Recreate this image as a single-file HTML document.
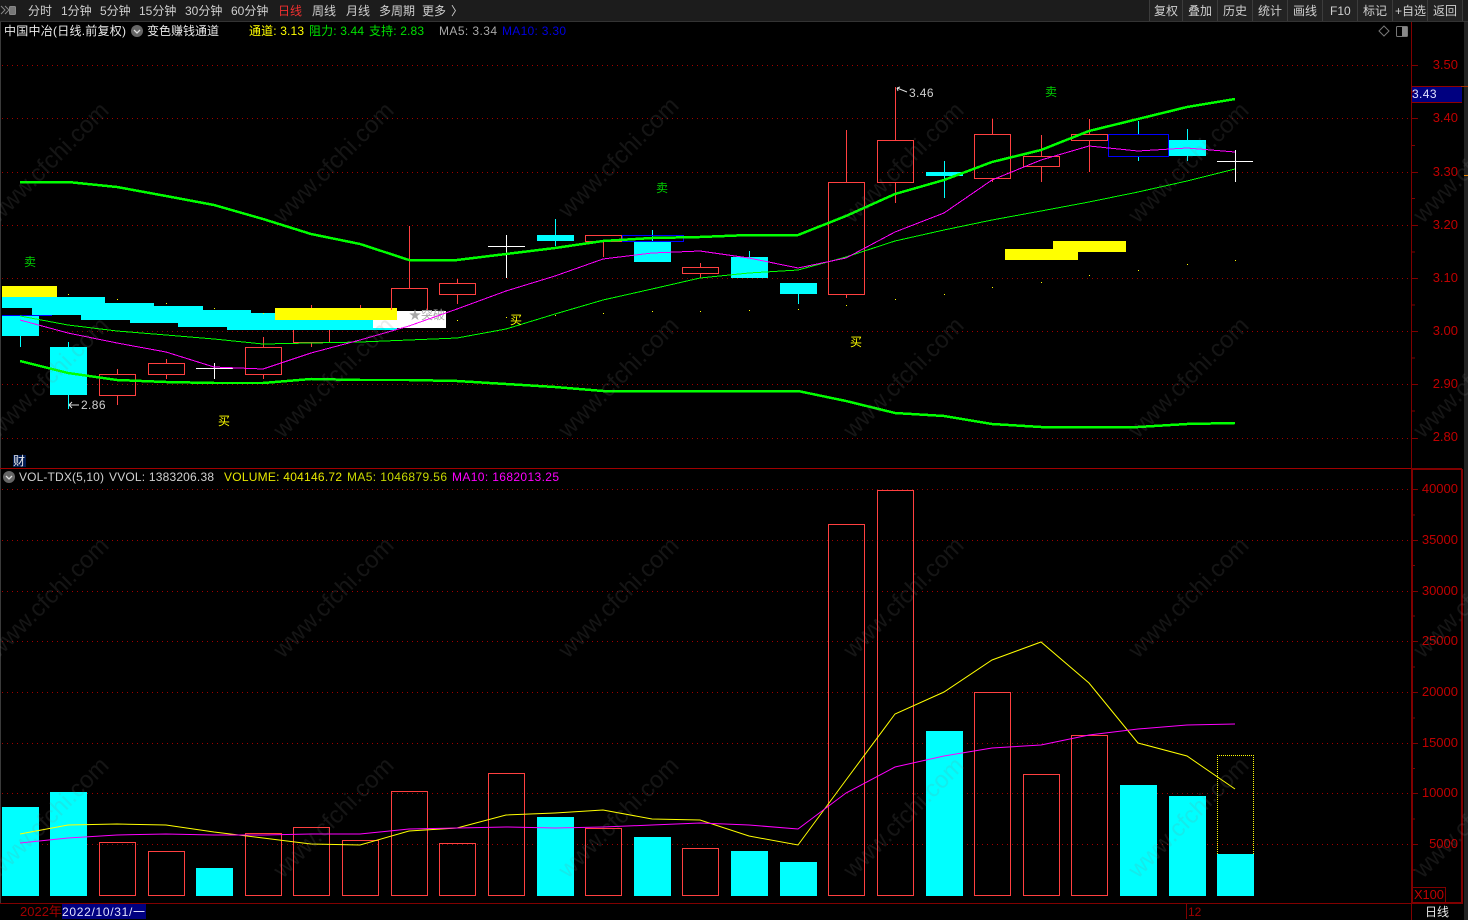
<!DOCTYPE html>
<html><head><meta charset="utf-8"><style>
html,body{margin:0;padding:0;background:#000;width:1468px;height:920px;overflow:hidden}
svg{display:block;position:absolute;left:0;top:0}
text{font-family:"Liberation Sans","Noto Sans CJK SC",sans-serif;font-size:12px}
.c{shape-rendering:crispEdges}
.r{fill:none;stroke:#ff4040;stroke-width:1}
.w{stroke:#ff4040;stroke-width:1}
.cw{stroke:#0ff;stroke-width:1}
.g{stroke:#a00000;stroke-width:1;stroke-dasharray:1 4}
.t{fill:#cfcfcf}
.y text{fill:#c00000;text-anchor:end;font-size:13px}
.wm text{font-size:24px;fill:rgba(130,130,130,.16);text-anchor:middle}
</style></head><body>
<svg width="1468" height="920" viewBox="0 0 1468 920" xmlns="http://www.w3.org/2000/svg">
<rect width="1468" height="920" fill="#000"/>
<!-- toolbar -->
<g class="c">
<rect width="1468" height="21" fill="#1c1c1c"/>
<rect y="21" width="1468" height="1" fill="#333"/>
<rect x="1149" width="313" height="21" fill="#232323"/>
<g fill="#3c3c3c"><rect x="1149" width="1" height="21"/><rect x="1182" width="1" height="21"/><rect x="1217" width="1" height="21"/><rect x="1252" width="1" height="21"/><rect x="1287" width="1" height="21"/><rect x="1322" width="1" height="21"/><rect x="1357" width="1" height="21"/><rect x="1392" width="1" height="21"/><rect x="1427" width="1" height="21"/><rect x="1462" width="1" height="21"/></g>
<rect x="0" y="22" width="1" height="882" fill="#3a3a3a"/>
</g>
<path d="M1 6l4 4-4 4M5 6l4 4-4 4" fill="none" stroke="#888" stroke-width="1"/>
<rect x="9.5" y="6.5" width="6" height="8" rx="1" fill="#777" stroke="#888"/>
<g class="t">
<text x="28" y="15">分时</text><text x="61" y="15">1分钟</text><text x="100" y="15">5分钟</text><text x="139" y="15">15分钟</text><text x="185" y="15">30分钟</text><text x="231" y="15">60分钟</text>
<text x="278" y="15" style="fill:#f03030">日线</text>
<text x="312" y="15">周线</text><text x="346" y="15">月线</text><text x="379" y="15">多周期</text><text x="422" y="15">更多</text><text x="451" y="15">〉</text>
<text x="1154" y="15">复权</text><text x="1188" y="15">叠加</text><text x="1223" y="15">历史</text><text x="1258" y="15">统计</text><text x="1293" y="15">画线</text><text x="1330" y="15">F10</text><text x="1363" y="15">标记</text><text x="1395" y="15">+自选</text><text x="1433" y="15">返回</text>
</g>
<!-- grid -->
<g class="c">
<path class="g" d="M2 65.5H1411M2 118.5H1411M2 172.5H1411M2 225.5H1411M2 278.5H1411M2 331.5H1411M2 384.5H1411M2 438.5H1411M2 489.5H1411M2 540.5H1411M2 591.5H1411M2 641.5H1411M2 692.5H1411M2 743.5H1411M2 793.5H1411M2 844.5H1411"/>
</g>
<!-- upper-left stepped blocks -->
<g class="c">
<rect x="373" y="311" width="73" height="17" fill="#fff"/>
<path fill="#0ff" d="M2 297H105V303H154V306H203V310H251V313H397V330H227V327H178V323H130V320H81V315H32V308H2Z"/>
<rect x="373" y="320" width="24" height="8" fill="#fff"/>
<rect x="2" y="286" width="55" height="11" fill="#ff0"/>
<rect x="275" y="308" width="122" height="12" fill="#ff0"/>
<rect x="1005" y="249" width="73" height="11" fill="#ff0"/>
<rect x="1053" y="241" width="73" height="11" fill="#ff0"/>
</g>
<text x="409" y="319" fill="#a8a8a8">★突破</text>
<!-- candles -->
<g class="c">
<path class="cw" d="M20.5 336V347M68.5 342V409M555.5 219V246M652.5 230V242M749.5 251V258M798.5 294V304M944.5 161V198M1138.5 121V134M1138.5 157V161M1187.5 129V161"/>
<path class="w" d="M117.5 369V374M117.5 396V405M166.5 359V363M166.5 375V379M263.5 337V347M263.5 375V379M311.5 305V308M311.5 343V347M360.5 305V308M409.5 226V288M457.5 279V283M457.5 295V304M603.5 242V257M700.5 263V267M700.5 274V278M846.5 130V182M846.5 294V298M895.5 87V140M895.5 182V203M992.5 119V134M992.5 178V182M1041.5 135V156M1041.5 166V182M1089.5 119V134M1089.5 140V172"/>
<rect x="2" y="316" width="37" height="20" fill="#0ff"/>
<rect x="50" y="347" width="37" height="48" fill="#0ff"/>
<rect x="537" y="235" width="37" height="6" fill="#0ff"/>
<rect x="634" y="242" width="37" height="20" fill="#0ff"/>
<rect x="731" y="257" width="37" height="21" fill="#0ff"/>
<rect x="780" y="283" width="37" height="11" fill="#0ff"/>
<rect x="926" y="172" width="37" height="4" fill="#0ff"/>
<rect x="1169" y="140" width="37" height="16" fill="#0ff"/>
<rect class="r" x="99.5" y="374.5" width="36" height="21"/>
<rect class="r" x="148.5" y="363.5" width="36" height="11"/>
<rect class="r" x="245.5" y="347.5" width="36" height="27"/>
<path class="r" d="M293.5 330V342.5H329.5V330"/>
<path class="r" d="M391.5 310V288.5H427.5V310"/>
<rect class="r" x="439.5" y="283.5" width="36" height="11"/>
<rect class="r" x="585.5" y="235.5" width="36" height="6"/>
<rect class="r" x="682.5" y="267.5" width="36" height="6"/>
<rect class="r" x="828.5" y="182.5" width="36" height="112"/>
<rect class="r" x="877.5" y="140.5" width="36" height="42"/>
<rect class="r" x="974.5" y="134.5" width="36" height="44"/>
<rect class="r" x="1023.5" y="156.5" width="36" height="10"/>
<rect class="r" x="1071.5" y="134.5" width="36" height="6"/>
<rect x="622.5" y="235.5" width="61" height="6" fill="none" stroke="#00f"/>
<rect x="1108.5" y="134.5" width="60" height="22" fill="none" stroke="#00f" stroke-width="1.4"/>
<path d="M2 315.5H52" stroke="#00f"/>
<path stroke="#fff" d="M196 368.5H233M214.5 363V379M488 246.5H525M506.5 235V278M1217 161.5H1253M1235.5 150V182"/>
<g fill="#ff0">
<rect x="68" y="294" width="1" height="1"/><rect x="117" y="299" width="1" height="1"/><rect x="166" y="303" width="1" height="1"/><rect x="214" y="308" width="1" height="1"/><rect x="263" y="313" width="1" height="1"/><rect x="457" y="320" width="1" height="1"/><rect x="506" y="317" width="1" height="1"/><rect x="555" y="315" width="1" height="1"/><rect x="603" y="313" width="1" height="1"/><rect x="652" y="311" width="1" height="1"/><rect x="700" y="311" width="1" height="1"/><rect x="749" y="310" width="1" height="1"/><rect x="798" y="309" width="1" height="1"/><rect x="846" y="305" width="1" height="1"/><rect x="895" y="299" width="1" height="1"/><rect x="944" y="294" width="1" height="1"/><rect x="992" y="287" width="1" height="1"/><rect x="1041" y="282" width="1" height="1"/><rect x="1089" y="275" width="1" height="1"/><rect x="1138" y="270" width="1" height="1"/><rect x="1187" y="264" width="1" height="1"/><rect x="1235" y="260" width="1" height="1"/>
</g>
</g>
<!-- price lines -->
<g fill="none" class="c">
<polyline stroke="#0f0" stroke-width="2.5" points="20,182 68,182 117,187 166,196 214,205 263,219 311,234 360,244 409,260 457,260 506,254 555,248 603,241 652,238 700,237 749,235 798,235 846,216 895,194 944,180 992,162 1041,150 1089,131 1138,119 1187,107 1235,99"/>
<polyline stroke="#0f0" stroke-width="2.5" points="20,361 68,373 117,380 166,382 214,383 263,383 311,379 360,380 409,380 457,381 506,384 555,387 603,391 652,391 700,391 749,391 798,391 846,401 895,413 944,416 992,424 1041,427 1089,427 1138,427 1187,424 1235,423"/>
<polyline stroke="#0f0" stroke-width="1" points="20,316 68,325 117,331 166,335 214,339 263,344 311,343 360,342 409,340 457,338 506,329 555,314 603,300 652,289 700,278 749,273 798,270 846,257 895,241 944,230 992,220 1041,211 1089,202 1138,192 1187,181 1235,169"/>
<polyline stroke="#f0f" stroke-width="1" points="20,320 68,333 117,343 166,352 214,367 263,369 311,353 360,340 409,326 457,309 506,291 555,276 603,259 652,253 700,251 749,258 798,268 846,258 895,232 944,213 992,180 1041,160 1089,146 1138,151 1187,148 1235,152"/>
</g>
<!-- annotations -->
<text x="24" y="266" style="fill:#00d000">卖</text>
<text x="656" y="192" style="fill:#00d000">卖</text>
<text x="1045" y="96" style="fill:#00d000">卖</text>
<text x="218" y="425" style="fill:#ff0">买</text>
<text x="510" y="324" style="fill:#ff0">买</text>
<text x="850" y="346" style="fill:#ff0">买</text>
<text x="909" y="97" class="t" textLength="24.5" lengthAdjust="spacing">3.46</text>
<text x="81" y="409" class="t" textLength="24.5" lengthAdjust="spacing">2.86</text>
<path d="M897 88l10 4M897 88l3-1M897 88l1 3M69 405H79M69 405l3-3M69 405l3 3" stroke="#ddd" fill="none"/>
<!-- info line -->
<text x="4" y="35" style="fill:#e8e8e8" textLength="122" lengthAdjust="spacing">中国中冶(日线.前复权)</text>
<circle cx="137" cy="31" r="6" fill="#666"/><path d="M134 30l3 3 3-3" stroke="#ddd" fill="none" stroke-width="1.3"/>
<text x="147" y="35" style="fill:#e8e8e8">变色赚钱通道</text>
<text x="249" y="35" style="fill:#ff0" textLength="55" lengthAdjust="spacing">通道: 3.13</text>
<text x="309" y="35" style="fill:#00e000" textLength="55" lengthAdjust="spacing">阻力: 3.44</text>
<text x="369" y="35" style="fill:#00e000" textLength="55" lengthAdjust="spacing">支持: 2.83</text>
<text x="439" y="35" style="fill:#a8a8a8" textLength="58" lengthAdjust="spacing">MA5: 3.34</text>
<text x="502" y="35" style="fill:#0000e0" textLength="64" lengthAdjust="spacing">MA10: 3.30</text>
<path d="M1384 26l5 5-5 5-5-5z" fill="none" stroke="#777"/>
<rect x="1396.5" y="26.5" width="11" height="10" rx="1" fill="none" stroke="#777"/><rect x="1402" y="27" width="5" height="9" fill="#888"/>
<!-- frame -->
<g class="c">
<rect x="0" y="468" width="1461" height="1" fill="#a00000"/>
<rect x="1411" y="22" width="1" height="882" fill="#800000"/>
<rect x="1411" y="469" width="2" height="435" fill="#800000"/>
<rect x="1461" y="469" width="2" height="435" fill="#800000"/>
<rect x="1412" y="468" width="50" height="2" fill="#800000"/>
<rect x="1464" y="22" width="4" height="898" fill="#222"/>
<rect x="0" y="903" width="1462" height="1" fill="#800000"/>
<rect x="1412" y="902" width="50" height="2" fill="#800000"/>
<rect x="1412" y="86" width="50" height="2" fill="#900000"/>
<rect x="1412" y="87" width="50" height="15" fill="#000080"/>
<rect x="1412" y="102" width="50" height="1" fill="#900000"/>
<rect x="1461" y="86" width="7" height="1" fill="#a03000"/>
<rect x="1464" y="175" width="4" height="1" fill="#e08000"/>
<path stroke="#800000" d="M1412 65.5H1418M1412 118.5H1418M1412 172.5H1418M1412 225.5H1418M1412 278.5H1418M1412 331.5H1418M1412 384.5H1418M1412 438.5H1418M1412 92H1415M1412 145.5H1415M1412 198.5H1415M1412 252H1415M1412 305H1415M1412 358H1415M1412 411H1415M1412 489.5H1418M1412 540.5H1418M1412 591.5H1418M1412 641.5H1418M1412 692.5H1418M1412 743.5H1418M1412 793.5H1418M1412 844.5H1418M1412 515H1415M1412 565.5H1415M1412 616H1415M1412 667H1415M1412 718H1415M1412 768.5H1415M1412 819H1415M1412 870H1415"/>
</g>
<text x="1412" y="98" style="fill:#e0e0ff" textLength="24.5" lengthAdjust="spacing">3.43</text>
<g class="y">
<text x="1458" y="69">3.50</text><text x="1458" y="122">3.40</text><text x="1458" y="176">3.30</text><text x="1458" y="229">3.20</text><text x="1458" y="282">3.10</text><text x="1458" y="335">3.00</text><text x="1458" y="388">2.90</text><text x="1458" y="441">2.80</text>
<text x="1458" y="493">40000</text><text x="1458" y="544">35000</text><text x="1458" y="595">30000</text><text x="1458" y="645">25000</text><text x="1458" y="696">20000</text><text x="1458" y="747">15000</text><text x="1458" y="797">10000</text><text x="1458" y="848">5000</text>
</g>
<rect x="1412.5" y="887.5" width="33" height="15" fill="none" stroke="#800000" class="c"/>
<text x="1414" y="899" style="fill:#c00000;font-size:13px" textLength="30" lengthAdjust="spacing">X100</text>
<!-- vol header -->
<rect x="13" y="455" width="13" height="12" fill="#001a50" class="c"/>
<text x="13" y="465" style="fill:#e8e8e8">财</text>
<circle cx="9" cy="477" r="6" fill="#666"/><path d="M6 476l3 3 3-3" stroke="#ddd" fill="none" stroke-width="1.3"/>
<text x="19" y="481" style="fill:#d0d0d0" textLength="85" lengthAdjust="spacing">VOL-TDX(5,10)</text>
<text x="109" y="481" style="fill:#d0d0d0" textLength="105" lengthAdjust="spacing">VVOL: 1383206.38</text>
<text x="224" y="481" style="fill:#e8e800" textLength="118" lengthAdjust="spacing">VOLUME: 404146.72</text>
<text x="347" y="481" style="fill:#c8d800" textLength="100" lengthAdjust="spacing">MA5: 1046879.56</text>
<text x="452" y="481" style="fill:#f0f" textLength="107" lengthAdjust="spacing">MA10: 1682013.25</text>
<!-- volume bars -->
<g class="c">
<g fill="#0ff">
<rect x="2" y="807" width="37" height="89"/><rect x="50" y="792" width="37" height="104"/><rect x="196" y="868" width="37" height="28"/><rect x="537" y="817" width="37" height="79"/><rect x="634" y="837" width="37" height="59"/><rect x="731" y="851" width="37" height="45"/><rect x="780" y="862" width="37" height="34"/><rect x="926" y="731" width="37" height="165"/><rect x="1120" y="785" width="37" height="111"/><rect x="1169" y="796" width="37" height="100"/><rect x="1217" y="854" width="37" height="42"/>
</g>
<rect class="r" x="99.5" y="842.5" width="36" height="53"/>
<rect class="r" x="148.5" y="851.5" width="36" height="44"/>
<rect class="r" x="245.5" y="833.5" width="36" height="62"/>
<rect class="r" x="293.5" y="827.5" width="36" height="68"/>
<rect class="r" x="342.5" y="840.5" width="36" height="55"/>
<rect class="r" x="391.5" y="791.5" width="36" height="104"/>
<rect class="r" x="439.5" y="843.5" width="36" height="52"/>
<rect class="r" x="488.5" y="773.5" width="36" height="122"/>
<rect class="r" x="585.5" y="828.5" width="36" height="67"/>
<rect class="r" x="682.5" y="848.5" width="36" height="47"/>
<rect class="r" x="828.5" y="524.5" width="36" height="371"/>
<rect class="r" x="877.5" y="490.5" width="36" height="405"/>
<rect class="r" x="974.5" y="692.5" width="36" height="203"/>
<rect class="r" x="1023.5" y="774.5" width="36" height="121"/>
<rect class="r" x="1071.5" y="735.5" width="36" height="160"/>
<path d="M1217.5 854V755.5H1253.5V854" fill="none" stroke="#ff0" stroke-dasharray="1 1"/>
</g>
<g fill="none">
<polyline stroke="#ff0" stroke-width="1" points="20,834 68,825 117,824 166,825 214,832 263,838 311,844 360,845 409,831 457,828 506,815 555,813 603,810 652,819 700,820 749,836 798,845 846,780 895,714 944,692 992,660 1041,642 1089,683 1138,743 1187,756 1235,789"/>
<polyline stroke="#f0f" stroke-width="1" points="20,843 68,838 117,835 166,834 214,835 263,835 311,834 360,834 409,829 457,828 506,827 555,828 603,827 652,825 700,823 749,825 798,829 846,793 895,767 944,756 992,748 1041,745 1089,735 1138,729 1187,725 1235,724"/>
</g>
<!-- time axis -->
<text x="20" y="916" style="fill:#a00000;font-size:13px">2022年</text>
<rect x="62" y="904" width="84" height="15" fill="#000080" class="c"/>
<text x="62" y="916" style="fill:#e0e0ff" textLength="83" lengthAdjust="spacing">2022/10/31/一</text>
<rect x="1186" y="904" width="1" height="15" fill="#800000" class="c"/>
<text x="1188" y="916" style="fill:#a00000">12</text>
<rect x="1411" y="904" width="1" height="16" fill="#800000" class="c"/>
<text x="1425" y="916" style="fill:#e8e8e8">日线</text>
<!-- watermark -->
<g class="wm">
<text transform="translate(54,168) rotate(-45)">www.cfchi.com</text><text transform="translate(339,168) rotate(-45)">www.cfchi.com</text><text transform="translate(624,163) rotate(-45)">www.cfchi.com</text><text transform="translate(909,168) rotate(-45)">www.cfchi.com</text><text transform="translate(1194,168) rotate(-45)">www.cfchi.com</text><text transform="translate(1479,168) rotate(-45)">www.cfchi.com</text>
<text transform="translate(54,383) rotate(-45)">www.cfchi.com</text><text transform="translate(339,383) rotate(-45)">www.cfchi.com</text><text transform="translate(624,383) rotate(-45)">www.cfchi.com</text><text transform="translate(909,383) rotate(-45)">www.cfchi.com</text><text transform="translate(1194,383) rotate(-45)">www.cfchi.com</text><text transform="translate(1479,383) rotate(-45)">www.cfchi.com</text>
<text transform="translate(54,603) rotate(-45)">www.cfchi.com</text><text transform="translate(339,603) rotate(-45)">www.cfchi.com</text><text transform="translate(624,603) rotate(-45)">www.cfchi.com</text><text transform="translate(909,603) rotate(-45)">www.cfchi.com</text><text transform="translate(1194,603) rotate(-45)">www.cfchi.com</text><text transform="translate(1479,603) rotate(-45)">www.cfchi.com</text>
<text transform="translate(54,823) rotate(-45)">www.cfchi.com</text><text transform="translate(339,823) rotate(-45)">www.cfchi.com</text><text transform="translate(624,823) rotate(-45)">www.cfchi.com</text><text transform="translate(909,823) rotate(-45)">www.cfchi.com</text><text transform="translate(1194,823) rotate(-45)">www.cfchi.com</text><text transform="translate(1479,823) rotate(-45)">www.cfchi.com</text>
</g>
</svg>
</body></html>
